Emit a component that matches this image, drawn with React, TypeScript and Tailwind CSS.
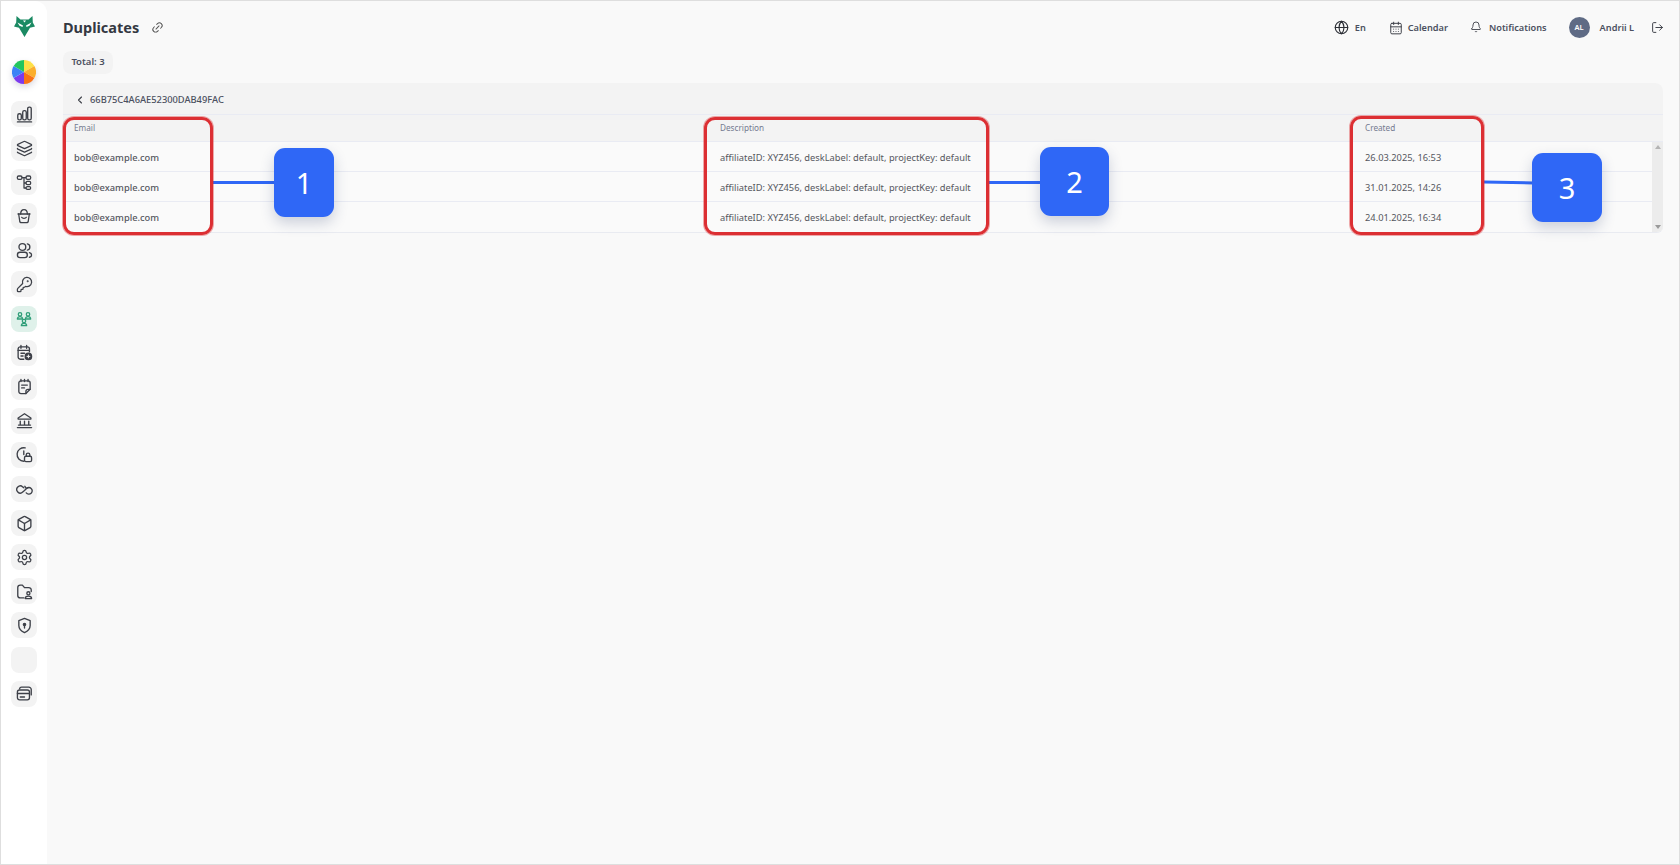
import React from "react";
import { Layers, KeyRound, Settings, Box, CalendarDays, Bell, LogOut, Globe, ChevronLeft, Link2 } from "lucide-react";

const S = ({ children, size = 16, className = "" }: { children: React.ReactNode; size?: number; className?: string }) => (
  <svg width={size} height={size} viewBox="0 0 24 24" fill="none" stroke="currentColor" strokeWidth={1.9} strokeLinecap="round" strokeLinejoin="round" className={className}>
    {children}
  </svg>
);

const Bars = () => (
  <S size={17}><path d="M2 22.500h20" /><rect x="2.500" y="11" width="5" height="8.500" rx="2.200" /><rect x="9.500" y="6.500" width="5" height="13" rx="2.200" /><rect x="16.500" y="1.500" width="5" height="18" rx="2.200" /></S>
);
const Tree = () => (
  <S><rect x="2" y="3" width="7" height="5" rx="2" /><rect x="15" y="3" width="7" height="5" rx="2" /><rect x="15" y="11" width="7" height="5" rx="2" /><rect x="15" y="19" width="7" height="4" rx="2" /><path d="M9 5.500h6M12 5.500V21h3M12 13.500h3" /></S>
);
const Basket = () => (
  <S><path d="M3 9h18" /><path d="M4 9l1.500 10a3 3 0 0 0 3 3h7a3 3 0 0 0 3-3L20 9" /><path d="M7 9c0-4 2-6.500 5-6.500S17 5 17 9" /><path d="M8.500 14c1 2 6 2 7 0" /></S>
);
const People = () => (
  <S size={17}><circle cx="9" cy="7" r="4.800" /><rect x="2" y="14.500" width="14" height="7.500" rx="3.700" /><path d="M16 2.600a4.500 4.500 0 0 1 0 8.800" /><path d="M19 15c1.800.5 3 1.800 3 3.300s-1.200 2.800-3 3.200" /></S>
);
const NetPeople = () => (
  <S>
    <circle cx="6" cy="5" r="2.600" /><path d="M2 12c0-2.500 2-3.500 4-3.500s4 1 4 3.500z" />
    <circle cx="18" cy="5" r="2.600" /><path d="M14 12c0-2.500 2-3.500 4-3.500s4 1 4 3.500z" />
    <circle cx="12" cy="15" r="2.600" /><path d="M8 22c0-2.500 2-3.500 4-3.500s4 1 4 3.500z" />
  </S>
);
const CalPlus = () => (
  <S size={17}><path d="M11 21.500H6a3 3 0 0 1-3-3V7a3 3 0 0 1 3-3h10a3 3 0 0 1 3 3v4" /><path d="M7 2v4M15 2v4M3 9h16M7 13h5M7 17h3" /><circle cx="17.500" cy="17.500" r="4.500" fill="currentColor" stroke="currentColor" /><path d="M17.500 15.500v4M15.500 17.500h4" stroke="#f3f3f3" strokeWidth={1.4} /></S>
);
const Note = () => (
  <S size={17}><path d="M7 2v3M12 2v3M17 2v3" /><path d="M14 22H7a3 3 0 0 1-3-3V7a3 3 0 0 1 3-3h10a3 3 0 0 1 3 3v9z" /><path d="M14 22v-3a3 3 0 0 1 3-3h3M8 10h8M8 14h4" /></S>
);
const Bank = () => (
  <S size={17}><path d="M3 8.500 12 2.500l9 6v1.500H3z" /><path d="M6 13v5M12 13v5M18 13v5M3.500 18.500h17M2 22h20" /></S>
);
const ClockLock = () => (
  <S size={17}><path d="M11 21.500A9.500 9.500 0 1 1 13 2.700" /><path d="M11 7v5" /><rect x="12" y="14.500" width="10" height="7.500" rx="2" /><path d="M14.500 14.500v-2a2.500 2.500 0 0 1 5 0v2" /></S>
);
const Inf = () => (
  <S size={17}><path d="M11 9.500 9.500 8.300A5 5 0 1 0 9.500 15.700L12 13.500l2.500-2.500a4.700 4.700 0 1 1 0 5.800" /><path d="M12.500 7.500l2 2.800 3-1" /></S>
);
const FolderAcc = () => (
  <S size={17}><path d="M11 21H6a3.500 3.500 0 0 1-3.500-3.500v-11A3.500 3.500 0 0 1 6 3h3l3 3.500h6A3.500 3.500 0 0 1 21.500 10v2" /><circle cx="17.500" cy="14.500" r="2.200" /><path d="M13 22c0-2.500 2-3.500 4.500-3.500S22 19.500 22 22z" /></S>
);
const ShieldKey = () => (
  <S size={17}><path d="M12 2 4 5v7c0 5 3.500 8 8 10 4.500-2 8-5 8-10V5z" /><circle cx="12" cy="10.500" r="1.600" fill="currentColor" /><path d="M12 12v3.500" /></S>
);
const Cards = () => (
  <S size={17}><path d="M5 5.500A3 3 0 0 1 8 3h10a3.500 3.500 0 0 1 3.500 3.500V14" /><rect x="2" y="7" width="17" height="14" rx="3" /><path d="M2 12h17M6 17h6" /></S>
);

const Wheel = () => {
  const colors = ["#fde047", "#fbae2c", "#f97316", "#7c3aed", "#3b82f6", "#22c55e"];
  const r = 12;
  return (
    <svg width="24" height="24" viewBox="0 0 24 24" className="block">
      {colors.map((c, i) => {
        const a = ((i * 60 - 90) * Math.PI) / 180;
        const b = (((i + 1) * 60 - 90) * Math.PI) / 180;
        return <path key={c} fill={c} d={`M12 12L${12 + r * Math.cos(a)} ${12 + r * Math.sin(a)}A${r} ${r} 0 0 1 ${12 + r * Math.cos(b)} ${12 + r * Math.sin(b)}Z`} />;
      })}
    </svg>
  );
};

const Logo = () => (
  <svg width="21" height="21" viewBox="0 0 21 21" className="block">
    <path fill="#1b8a63" d="M2.500 0 6.500 3.500h8l4-3.500.3 6.500L21 10.500l-5 1.300-5.500 9.200L5 11.800 0 10.500l2.200-4z" />
    <path fill="#fff" d="M3.500 6.500 9 9.500 8.500 11 5.500 9.800zM17.500 6.500 12 9.500l.5 1.500 3-1.200z" />
    <path fill="#fff" d="M9 4.500h3l-1.500 2z" />
  </svg>
);

const side: { icon: React.ReactNode; active?: boolean }[] = [
  { icon: <Bars /> },
  { icon: <Layers size={17} strokeWidth={1.8} /> },
  { icon: <Tree /> },
  { icon: <Basket /> },
  { icon: <People /> },
  { icon: <KeyRound size={17} strokeWidth={1.8} /> },
  { icon: <NetPeople />, active: true },
  { icon: <CalPlus /> },
  { icon: <Note /> },
  { icon: <Bank /> },
  { icon: <ClockLock /> },
  { icon: <Inf /> },
  { icon: <Box size={17} strokeWidth={1.9} /> },
  { icon: <Settings size={17} strokeWidth={1.8} /> },
  { icon: <FolderAcc /> },
  { icon: <ShieldKey /> },
  { icon: null },
  { icon: <Cards /> },
];

const rows = [
  ["bob@example.com", "26.03.2025, 16:53"],
  ["bob@example.com", "31.01.2025, 14:26"],
  ["bob@example.com", "24.01.2025, 16:34"],
];
const desc = "affiliateID: XYZ456, deskLabel: default, projectKey: default";

const Nav = ({ icon, label, gap }: { icon: React.ReactNode; label: string; gap: string }) => (
  <div className={`flex items-center ${gap}`}>
    {icon}
    <span className="text-[9.200px] font-semibold text-[#4b5060]">{label}</span>
  </div>
);

const Mark = ({ n, className }: { n: number; className: string }) => (
  <div className={`absolute flex h-[69px] items-center justify-center rounded-[11px] bg-[#2f67f6] text-[29px] text-white shadow-[0_6px_14px_rgba(40,60,110,0.22)] ${className}`}>{n}</div>
);

const redBox = "absolute rounded-[11px] border-[3px] border-[#dc2f33] shadow-[0_0_0_1px_rgba(220,47,51,0.4)]";

export default function App() {
  return (
    <div className="relative flex h-screen w-full overflow-hidden border border-[#dedede] bg-[#f9f9f9] font-['Noto_Sans',sans-serif]">
      <aside className="flex w-[46px] shrink-0 flex-col items-center rounded-tr-xl bg-white pt-[15px]">
        <Logo />
        <div className="mt-[23px] rounded-full shadow-[0_3px_6px_rgba(80,80,120,0.22)]">
          <Wheel />
        </div>
        <div className="mt-[17px] flex flex-col gap-[8.100px]">
          {side.map((s, i) => (
            <div key={i} className={`flex h-[26px] w-[26px] items-center justify-center rounded-lg ${s.active ? "bg-[#dff1ea] text-[#2f9e78]" : "bg-[#f3f3f3] text-[#3d4048]"}`}>
              {s.icon}
            </div>
          ))}
        </div>
      </aside>

      <main className="min-w-0 flex-1 px-4">
        <header className="flex h-[52px] items-start justify-between pt-[15px]">
          <div className="flex items-center gap-[12px]">
            <h1 className="text-[14.500px] font-bold leading-[22px] text-[#343842]">Duplicates</h1>
            <Link2 size={13} strokeWidth={1.8} className="-rotate-45 text-[#555]" />
          </div>
          <div className="-mr-[1px] flex items-center pt-[1px]">
            <Nav gap="gap-[6px]" label="En" icon={<Globe size={15} strokeWidth={1.8} className="text-[#2c2f36]" />} />
            <div className="w-[23px]" />
            <Nav gap="gap-[5px]" label="Calendar" icon={<CalendarDays size={14} strokeWidth={1.7} className="text-[#3d4048]" />} />
            <div className="w-[22px]" />
            <Nav gap="gap-[7px]" label="Notifications" icon={<Bell size={12} strokeWidth={1.8} className="text-[#3d4048]" />} />
            <div className="w-[22px]" />
            <div className="flex h-[21px] w-[21px] items-center justify-center rounded-full bg-[#5f6b85] text-[7.500px] font-semibold text-white">AL</div>
            <span className="ml-[10px] text-[9.200px] font-semibold text-[#4b5060]">Andrii L</span>
            <LogOut size={13} strokeWidth={1.8} className="ml-[17px] text-[#3d4048]" />
          </div>
        </header>

        <div className="-mt-[2px] flex h-[23px] w-[50px] items-center justify-center rounded-lg bg-[#f3f3f3] text-[9.500px] font-semibold text-[#4b5060]">Total: 3</div>

        <section className="mt-[9px] overflow-hidden rounded-t-lg rounded-b-md border-b border-[#e9ebf1] bg-[#fafafa]">
          <div className="flex h-[32px] items-center gap-[4px] border-b border-[#e9ebf3] bg-[#f3f3f3] pl-[11px] pt-[2px] text-[9.300px] font-medium text-[#4b5060]">
            <ChevronLeft size={12} strokeWidth={2.200} className="text-[#3d4048]" />
            66B75C4A6AE52300DAB49FAC
          </div>
          <div className="grid h-[27px] grid-cols-[646px_645px_1fr] items-center border-b border-[#e9ebf3] bg-[#f3f3f3] pt-[1px] text-[8.200px] text-[#747a90]">
            <div className="pl-[11px]">Email</div>
            <div className="pl-[11px]">Description</div>
            <div className="pl-[11px]">Created</div>
          </div>
          <div className="flex">
            <div className="min-w-0 flex-1">
              {rows.map((r, i) => (
                <div key={i} className="grid h-[30px] grid-cols-[646px_645px_1fr] items-center border-b border-[#e9ebf3] pt-[2px] text-[9.300px] text-[#55575e] last:border-b-0">
                  <div className="pl-[11px] font-medium">{r[0]}</div>
                  <div className="pl-[11px]">{desc}</div>
                  <div className="pl-[11px]">{r[1]}</div>
                </div>
              ))}
            </div>
            <div className="flex w-[11px] flex-col items-center justify-between bg-[#ececec] py-[3px]">
              <span className="h-0 w-0 border-x-[3px] border-b-[4px] border-x-transparent border-b-[#b4b4b4]" />
              <span className="h-0 w-0 border-x-[3px] border-t-[4px] border-x-transparent border-t-[#9a9a9a]" />
            </div>
          </div>
        </section>
      </main>

      {/* annotation overlay */}
      <div className="absolute left-[212px] top-[180px] h-[3px] w-[62px] bg-[#2f67f6]" />
      <div className="absolute left-[988px] top-[180px] h-[3px] w-[52px] bg-[#2f67f6]" />
      <div className="absolute left-[1483px] top-[180px] h-[3px] w-[50px] rotate-[1deg] bg-[#2f67f6]" />
      <div className={`${redBox} left-[62px] top-[116px] h-[118px] w-[150px]`} />
      <div className={`${redBox} left-[703px] top-[116px] h-[118px] w-[285px]`} />
      <div className={`${redBox} left-[1349px] top-[115px] h-[119px] w-[134px]`} />
      <Mark n={1} className="left-[273px] top-[147px] w-[60px]" />
      <Mark n={2} className="left-[1039px] top-[146px] w-[69px]" />
      <Mark n={3} className="left-[1531px] top-[152px] w-[70px]" />
    </div>
  );
}
